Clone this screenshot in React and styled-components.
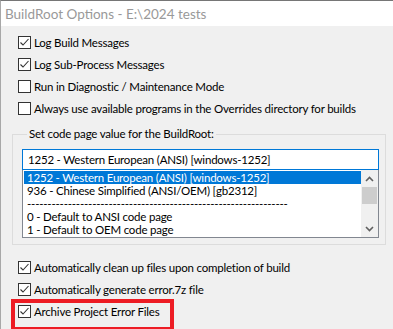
import React from "react";
import styled, { createGlobalStyle } from "styled-components";

const Global = createGlobalStyle`
  html, body { margin: 0; padding: 0; background: #f0f0f0; }
  * { box-sizing: border-box; }
`;

const Window = styled.div`
  width: 393px;
  height: 329px;
  overflow: hidden;
  background: #f0f0f0;
  border-top: 1px solid #767676;
  border-left: 1px solid #a8a8a8;
  font-family: Lato, "Liberation Sans", sans-serif;
  font-size: 11.5px;
  letter-spacing: -0.2px;
  color: #000;
  display: flex;
  flex-direction: column;
`;

const TitleBar = styled.div`
  height: 25px;
  background: #fff;
  display: flex;
  align-items: center;
  padding-left: 4px;
  color: #999;
  font-size: 13.5px;
  letter-spacing: 0;
`;

const Body = styled.div`
  flex: 1;
  display: flex;
  flex-direction: column;
  padding: 5px 7px 0 11px;
`;

const Options = styled.div`
  display: flex;
  flex-direction: column;
  padding-left: 6px;
`;

const Row = styled.label`
  position: relative;
  height: 22px;
  display: flex;
  align-items: center;
  gap: 3px;
  white-space: nowrap;

  ${(p) =>
    p.$marked &&
    `
    &::after {
      content: "";
      position: absolute;
      left: -7px;
      top: -1px;
      width: 155px;
      height: 24px;
      border: 4px solid #ed1c24;
    }
  `}
`;

const Box = styled.span`
  width: 13px;
  height: 13px;
  flex: none;
  border: 1px solid #333;
  background: #fff;
  display: flex;
  align-items: center;
  justify-content: center;
`;

const Check = () => (
  <svg width="11" height="11" viewBox="0 0 11 11">
    <path d="M1.5 5.5 L4 8 L9.5 2" fill="none" stroke="#333" strokeWidth="1.1" />
  </svg>
);

const Option = ({ checked, marked, children }) => (
  <Row $marked={marked}>
    <Box>{checked && <Check />}</Box>
    <span>{children}</span>
  </Row>
);

const Group = styled.fieldset`
  margin: 8px 0 0 0;
  padding: 8px 6px 6px 9px;
  border: 1px solid #dcdcdc;
  width: 374px;
`;

const Legend = styled.legend`
  padding: 0 2px;
  margin-left: 5px;
  line-height: 14px;
`;

const Combo = styled.div`
  height: 21px;
  border: 1px solid #0078d7;
  background: #fff;
  display: flex;
  align-items: center;
  padding-left: 5px;
  white-space: nowrap;
`;

const List = styled.div`
  height: 68px;
  border: 1px solid #828790;
  border-top: none;
  background: #fff;
  display: flex;
  padding: 1px 0 0 1px;
`;

const Items = styled.div`
  flex: 1;
  display: flex;
  flex-direction: column;
`;

const Item = styled.div`
  height: 13px;
  line-height: 13px;
  padding-left: 3px;
  white-space: nowrap;
  overflow: hidden;
  background: ${(p) => (p.$selected ? "#0078d7" : "transparent")};
  color: ${(p) => (p.$selected ? "#fff" : "#000")};
`;

const ScrollBar = styled.div`
  width: 17px;
  background: #f0f0f0;
  display: flex;
  flex-direction: column;
  align-items: center;
  justify-content: space-between;
  margin-top: -1px;
`;

const Arrow = styled.div`
  height: 17px;
  width: 17px;
  display: flex;
  align-items: center;
  justify-content: center;
`;

const Thumb = styled.div`
  width: 15px;
  height: 17px;
  background: #cdcdcd;
`;

const Track = styled.div`
  flex: 1;
  display: flex;
  flex-direction: column;
  align-items: center;
`;

const Chevron = ({ up }) => (
  <svg width="9" height="6" viewBox="0 0 9 6">
    <path
      d={up ? "M1 5 L4.5 1.5 L8 5" : "M1 1 L4.5 4.5 L8 1"}
      fill="none"
      stroke="#606060"
      strokeWidth="1.6"
    />
  </svg>
);

const Lower = styled.div`
  display: flex;
  flex-direction: column;
  padding-left: 6px;
  margin-top: 11px;
`;

const SEPARATOR = "-".repeat(64);

export default function App() {
  return (
    <>
      <Global />
      <Window>
        <TitleBar>BuildRoot Options - E:\2024 tests</TitleBar>
        <Body>
          <Options>
            <Option checked>Log Build Messages</Option>
            <Option checked>Log Sub-Process Messages</Option>
            <Option>Run in Diagnostic / Maintenance Mode</Option>
            <Option>Always use available programs in the Overrides directory for builds</Option>
          </Options>
          <Group>
            <Legend>Set code page value for the BuildRoot:</Legend>
            <Combo>1252 - Western European (ANSI) [windows-1252]</Combo>
            <List>
              <Items>
                <Item $selected>1252 - Western European (ANSI) [windows-1252]</Item>
                <Item>936 - Chinese Simplified (ANSI/OEM) [gb2312]</Item>
                <Item>{SEPARATOR}</Item>
                <Item>0 - Default to ANSI code page</Item>
                <Item>1 - Default to OEM code page</Item>
              </Items>
              <ScrollBar>
                <Track>
                  <Arrow><Chevron up /></Arrow>
                  <Thumb />
                </Track>
                <Arrow><Chevron /></Arrow>
              </ScrollBar>
            </List>
          </Group>
          <Lower>
            <Option checked>Automatically clean up files upon completion of build</Option>
            <Option checked>Automatically generate error.7z file</Option>
            <Option checked marked>Archive Project Error Files</Option>
          </Lower>
        </Body>
      </Window>
    </>
  );
}
